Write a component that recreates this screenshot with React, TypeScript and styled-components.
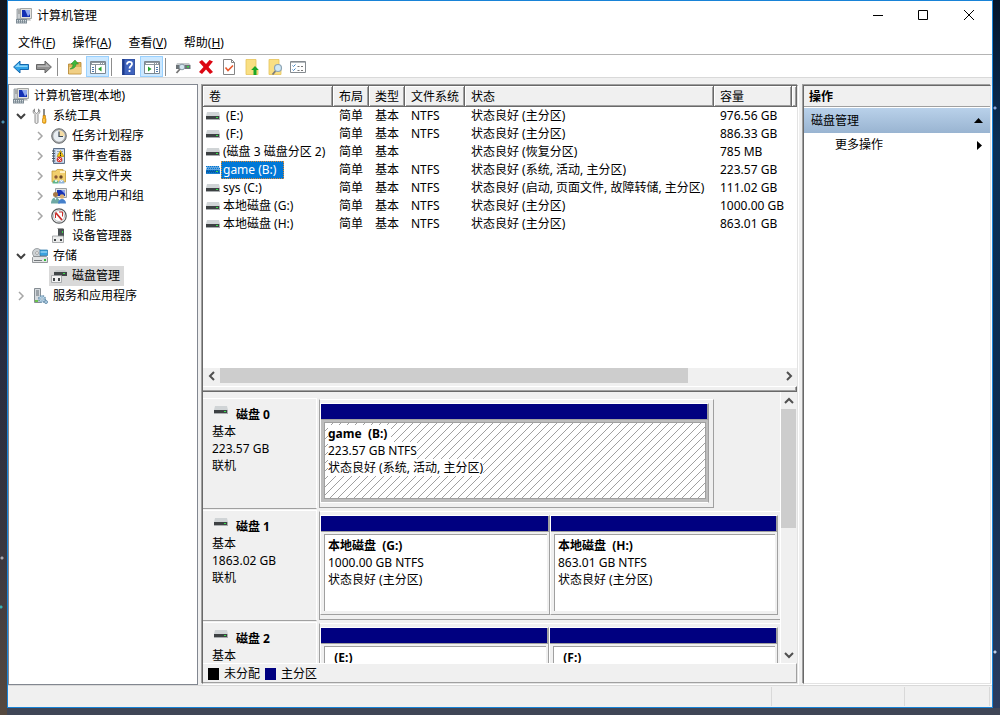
import React from "react";
import styled, { createGlobalStyle, css } from "styled-components";

const Global = createGlobalStyle`
  *, *::before, *::after { box-sizing: border-box; }
  body {
    margin: 0;
    color: #000;
    font: 12px/18px "Noto Sans", "Noto Sans CJK SC", sans-serif;
  }
  button {
    margin: 0;
    padding: 0;
    border: 0;
    background: none;
    color: inherit;
    font: inherit;
    text-align: left;
  }
  ul { margin: 0; padding: 0; list-style: none; }
  svg { display: block; flex: none; }
`;

/* ---------- window frame ---------- */

const Desktop = styled.div`
  display: flex;
  height: 100vh;
  padding: 0 7px 7px;
  background:
    radial-gradient(circle at 1px 607px, #35b0b0 1px, transparent 2px),
    radial-gradient(circle at 2px 558px, #a9a9b0 1px, transparent 2px),
    radial-gradient(circle at 3px 122px, #4a90b0 1px, transparent 2px),
    radial-gradient(circle at 995px 108px, #8ea8d8 1px, transparent 2px),
    radial-gradient(circle at 995px 652px, #c0d0e8 1px, transparent 2px),
    linear-gradient(#3f4656, #3f4656) 100% 100% / calc(100% - 7px) 7px no-repeat,
    linear-gradient(#04152c, #0b3056 20%, #0c2c50 60%, #2b3d60) 100% 0 / 7px 100% no-repeat,
    linear-gradient(#141720, #1b1f2c 30%, #282c40 50%, #37363f 75%, #56493f);
`;

const Window = styled.main`
  display: flex;
  flex-direction: column;
  flex: 1;
  min-width: 0;
  border: 1px solid #1883d7;
  background: #fff;
`;

const TitleBar = styled.header`
  display: flex;
  align-items: center;
  height: 29px;
  flex: none;
  padding-left: 8px;
`;

const Title = styled.h1`
  flex: 1;
  margin: 0 0 0 5px;
  font-size: 12px;
  font-weight: 400;
`;

const CaptionButton = styled.button`
  display: grid;
  place-items: center;
  width: 46px;
  height: 29px;
`;

const MenuBar = styled.nav`
  display: flex;
  gap: 17px;
  height: 25px;
  flex: none;
  padding: 2px 10px 0;
  border-bottom: 1px solid #b4b4b4;
`;

const ToolBar = styled.div`
  display: flex;
  height: 23px;
  flex: none;
  padding: 1px 1px 0;
  border-bottom: 1px solid #d9d9d9;
`;

const ToolButton = styled.button<{ $active?: boolean }>`
  display: grid;
  place-items: center;
  width: 23px;
  height: 21px;
  ${(p) =>
    p.$active &&
    css`
      border: 1px solid #99d1ff;
      background: #cce8ff;
    `}
`;

const ToolDivider = styled.span`
  width: 1px;
  height: 18px;
  margin: 2px 5px 0 2px;
  background: #8d8d8d;
`;

const Workspace = styled.div`
  display: grid;
  grid-template-columns: 190px minmax(0, 1fr) 189px;
  grid-template-rows: minmax(0, 1fr);
  gap: 3px;
  flex: 1;
  min-height: 0;
  padding: 6px 1px 0 0;
  background: #f0f0f0;
`;

const StatusBar = styled.footer`
  display: grid;
  grid-template-columns: 1fr 133px 85px;
  height: 22px;
  flex: none;
  padding: 1px 2px 1px 0;
  border-top: 1px solid #d9d9d9;
  background: #f0f0f0;
`;

const StatusCell = styled.span`
  border-right: 1px solid #d9d9d9;
`;

/* ---------- navigation tree ---------- */

const TreePane = styled.nav`
  overflow: hidden;
  padding: 1px 0 0 2px;
  border: 1px solid #828790;
  background: #fff;
`;

const TreeRow = styled.li<{ $depth: number }>`
  display: flex;
  align-items: center;
  height: 20px;
  padding-left: ${(p) => (p.$depth ? 2 + (p.$depth - 1) * 19 : 0)}px;
`;

const Twisty = styled.button`
  display: grid;
  place-items: center;
  width: 16px;
  height: 16px;
  margin-right: 1px;
`;

const TreeLabel = styled.button<{ $selected?: boolean }>`
  display: flex;
  align-items: center;
  gap: 5px;
  height: 20px;
  padding: 0 4px 0 2px;
  white-space: nowrap;
  background: ${(p) => (p.$selected ? "#d9d9d9" : "transparent")};
`;

/* ---------- volume list ---------- */

const sunken = css`
  margin: 1px 0 1px 1px;
  border: 1px solid;
  border-color: #696969 #e3e3e3 #e3e3e3 #696969;
  box-shadow: -1px -1px #a0a0a0, 1px 1px #fff;
`;

const CenterPane = styled.section`
  display: flex;
  flex-direction: column;
  min-width: 0;
  ${sunken}
  margin-right: 1px;
`;

const ListView = styled.div`
  flex: 1 1 0;
  min-height: 0;
  overflow: hidden;
  background: #fff;
`;

const VolumeTable = styled.table`
  width: 100%;
  border-collapse: separate;
  border-spacing: 0;
  table-layout: fixed;
`;

const HeadCell = styled.th<{ $width?: number }>`
  width: ${(p) => (p.$width ? `${p.$width}px` : "auto")};
  height: 21px;
  padding: 2px 0 0 6px;
  border: solid;
  border-width: 0 1px 1px 0;
  border-color: #696969;
  background: #f0f0f0;
  box-shadow: inset 1px 1px #fff, inset -1px -1px #a0a0a0;
  font-weight: 400;
  text-align: left;
  white-space: nowrap;
`;

const Cell = styled.td`
  height: 18px;
  padding: 0 0 0 6px;
  overflow: hidden;
  white-space: nowrap;
`;

const NameCell = styled(Cell)`
  padding-left: 3px;
`;

const VolumeName = styled.div`
  display: flex;
  align-items: center;
  gap: 1px;
  height: 18px;
`;

const NameText = styled.span<{ $selected?: boolean }>`
  height: 18px;
  padding: 0 2px;
  white-space: pre;
  ${(p) =>
    p.$selected &&
    css`
      padding-right: 8px;
      outline: 1px dotted #e08a30;
      outline-offset: -1px;
      background: #0078d7;
      color: #fff;
    `}
`;

/* ---------- scroll bars and splitter ---------- */

const HorizontalScroll = styled.div`
  display: flex;
  height: 18px;
  flex: none;
  padding-bottom: 3px;
  background: #f0f0f0;
`;

const VerticalScroll = styled.div`
  display: flex;
  flex-direction: column;
  width: 17px;
  flex: none;
  padding-right: 1px;
  border-left: 1px solid #fff;
  background: #f0f0f0;
`;

const ScrollButton = styled.button`
  display: grid;
  place-items: center;
  min-width: 15px;
  flex: 0 0 17px;
`;

const ScrollThumb = styled.span<{ $share: number }>`
  flex: ${(p) => p.$share} 1 0;
  background: #cdcdcd;
`;

const ScrollRest = styled.span<{ $share: number }>`
  flex: ${(p) => p.$share} 1 0;
`;

const Splitter = styled.div`
  height: 6px;
  flex: none;
  border: solid;
  border-width: 1px 1px 1px 0;
  border-color: #fff #696969 #696969 #fff;
  background: #f0f0f0;
  box-shadow: inset -1px -1px #a0a0a0;
`;

/* ---------- disk map ---------- */

const DiskMap = styled.div`
  display: flex;
  flex: 0 0 271px;
  min-height: 0;
  background: #f0f0f0;
`;

const DiskList = styled.div`
  flex: 1;
  min-width: 0;
  padding-top: 6px;
  overflow: hidden;
`;

const DiskRow = styled.div`
  display: flex;
  gap: 2px;
  height: 112px;
`;

const DiskLabel = styled.div`
  width: 114px;
  height: 111px;
  flex: none;
  padding: 7px 0 0 9px;
  border: solid;
  border-width: 1px 1px 1px 0;
  border-color: #fff #fff #a0a0a0;
  line-height: 17px;
`;

const DiskTitle = styled.h2`
  display: flex;
  gap: 8px;
  margin: 0 0 0 2px;
  font-size: 12px;
  line-height: 17px;
`;

const Volumes = styled.div<{ $width?: number }>`
  display: flex;
  flex: ${(p) => (p.$width ? `0 1 ${p.$width}px` : "1 1 0")};
  min-width: 0;
  height: 109px;
  margin-top: 1px;
  padding: 3px ${(p) => (p.$width ? 4 : 2)}px 4px 0;
  border: solid;
  border-width: 1px ${(p) => (p.$width ? 1 : 0)}px 1px 1px;
  border-color: #fff #a0a0a0 #a0a0a0;
`;

const Volume = styled.article<{ $share: number; $selected?: boolean }>`
  display: flex;
  flex-direction: column;
  flex: ${(p) => p.$share} 1 0;
  min-width: 0;
  border: 1px solid;
  border-color: #fff #a0a0a0 ${(p) => (p.$selected ? "#fff" : "#a0a0a0")} #fff;
  background: ${(p) => (p.$selected ? "#bdbdbd" : "#f0f0f0")};
`;

const VolumeCap = styled.div`
  height: 16px;
  flex: none;
  background: #000080;
  box-shadow: inset -1px -1px #a0a0a0;
`;

const VolumeBody = styled.div<{ $selected?: boolean }>`
  position: relative;
  flex: 1;
  margin: 2px 2px 3px 3px;
  padding: 2px 3px;
  overflow: hidden;
  border: solid #a0a0a0;
  border-width: ${(p) => (p.$selected ? "1px" : "1px 0 0 1px")};
  background: #fff;
  line-height: 17px;
`;

const HatchLayer = styled.svg`
  position: absolute;
  inset: 0;
`;

const VolumeLine = styled.div`
  position: relative;
  width: max-content;
  background: #fff;
  white-space: pre;
`;

const VolumeTitle = styled(VolumeLine).attrs({ as: "h3" })`
  margin: 0;
  padding-right: 4px;
  font-size: 12px;
`;

const Legend = styled.div`
  display: flex;
  align-items: center;
  gap: 5px;
  height: 20px;
  flex: none;
  padding: 1px 0 0 5px;
  border: solid;
  border-width: 1px 1px 1px 0;
  border-color: #fff #a0a0a0 #a0a0a0;
  background: #f0f0f0;
`;

const LegendItem = styled.span`
  display: flex;
  align-items: center;
  gap: 5px;
`;

const Swatch = styled.i<{ $color: string }>`
  width: 11px;
  height: 12px;
  background: ${(p) => p.$color};
`;

/* ---------- actions pane ---------- */

const ActionsPane = styled.aside`
  min-width: 0;
  background: #fff;
  ${sunken}
`;

const ActionsTitle = styled.h2`
  height: 21px;
  margin: 0;
  padding: 1px 0 0 5px;
  border-bottom: 1px solid #a0a0a0;
  background: #f0f0f0;
  font-size: 12px;
  line-height: 19px;
`;

const ActionGroup = styled.button`
  display: flex;
  align-items: center;
  justify-content: space-between;
  width: 100%;
  height: 25px;
  margin-top: 1px;
  padding: 0 7px;
  background: linear-gradient(#b9d1ea, #99b4d1);
`;

const ActionItem = styled.button`
  display: flex;
  align-items: center;
  justify-content: space-between;
  width: 100%;
  height: 24px;
  padding: 0 8px 0 31px;
`;

/* ---------- icons ---------- */

const Svg = ({ children }: React.PropsWithChildren) => (
  <svg width="16" height="16" viewBox="0 0 16 16" aria-hidden="true">
    {children}
  </svg>
);

const ComputerIcon = () => (
  <Svg>
    <path d="M1 1h5v10H1z" fill="#c9cdd0" stroke="#8c9297" strokeWidth=".8" />
    <path d="M2 3h3M2 5h3" stroke="#777" strokeWidth=".8" />
    <path d="M4.500.5h11v10h-11z" fill="#e3e3df" stroke="#a5a7a5" />
    <path d="M6 2h8v7H6z" fill="#1430b4" />
    <path d="M9 2h5v4l-2 2.500z" fill="#91a9ef" />
    <path d="M10 11h4l1 1.500h-4z" fill="#b5b8b8" />
    <path d="M0 11h11v4.500H0z" fill="#7d8b95" />
    <path d="M1 12.500h9M1 14h9" stroke="#eef2f4" strokeWidth=".8" strokeDasharray="1 1" />
  </Svg>
);

const ToolsIcon = () => (
  <Svg>
    <path d="M2.500 1v3l2 1.500 2-1.500V1C8 2 8.500 4 7 5.500L6 6.500V14c0 2-3 2-3 0V6.500L2 5.500C.5 4 1 2 2.500 1z" fill="#e9e9e9" stroke="#777" strokeWidth=".8" />
    <path d="M12 1v7" stroke="#666" strokeWidth="1.500" />
    <path d="M11 7.500h2.500V10l.5 1v3.500c-.5 1.200-3 1.200-3.500 0V11l.5-1z" fill="#f5ae19" stroke="#b97509" strokeWidth=".6" />
    <path d="M12 11v3" stroke="#ffe08a" />
  </Svg>
);

const ClockIcon = () => (
  <Svg>
    <circle cx="8" cy="8" r="7.300" fill="#a3a6a8" stroke="#6d7072" strokeWidth="1" />
    <circle cx="8" cy="8" r="5.700" fill="#e9eef2" />
    <path d="M8 8V2.300A5.700 5.700 0 0 1 13.700 8z" fill="#f5dda6" />
    <path d="M8 3.500V8.500h4" fill="none" stroke="#3c4a58" strokeWidth="1.200" />
  </Svg>
);

const EventIcon = () => (
  <Svg>
    <path d="M2.500.5h11v15h-11z" fill="#b8cce4" stroke="#5d6f87" />
    <path d="M5 2h8v12H5z" fill="#dfe6f0" />
    <path d="M6 3.500h6M6 6h6M6 8h6M6 13h6" stroke="#8fa2bd" />
    <path d="M1 3h3M1 5.500h3M1 8h3M1 10.500h3M1 13h3" stroke="#4d5866" />
    <path d="M9.500 2.500l3.500 6H6z" fill="#f9c80e" stroke="#b18a00" strokeWidth=".6" />
    <path d="M9.500 4.500v2M9.500 7v1" stroke="#222" />
    <circle cx="8.500" cy="11.500" r="2.800" fill="#d93a35" />
    <path d="M7.300 10.300l2.400 2.400m0-2.400l-2.400 2.400" stroke="#fff" />
  </Svg>
);

const SharedIcon = () => (
  <Svg>
    <path d="M1 3h4l1-1.500h6V3h2.500v11H1z" fill="#f2cf6d" stroke="#c29a35" strokeWidth=".8" />
    <path d="M9 3h5v2H9z" fill="#fff2c4" />
    <circle cx="5" cy="9" r="1.700" fill="#8c5a35" />
    <circle cx="10" cy="9" r="1.700" fill="#6a4528" />
    <path d="M1.500 15.500c0-5 6-5 6 0z" fill="#5fb58c" />
    <path d="M7.500 15.500c0-5 6-5 6 0z" fill="#8fb4d8" />
    <path d="M4 12l1 2 1-2M9.500 12l1 2 1-2" stroke="#fff" fill="none" />
  </Svg>
);

const UsersIcon = () => (
  <Svg>
    <path d="M4.500.5h11v9h-11z" fill="#dfe2e2" stroke="#9ba0a2" />
    <path d="M6 2h8v6H6z" fill="#1733b5" />
    <path d="M10 2h4v4z" fill="#8da4ec" />
    <circle cx="4.500" cy="6.500" r="2.500" fill="#a77845" />
    <circle cx="11" cy="8.500" r="2.300" fill="#d8b073" />
    <path d="M0 15.500c0-8 9-8 9 0z" fill="#6ea9a4" />
    <path d="M7 15.500c0-6 8-6 8 0z" fill="#4580cb" />
    <path d="M3.500 10l1 2 1-2" fill="#fff" />
  </Svg>
);

const GaugeIcon = () => (
  <Svg>
    <circle cx="8" cy="8" r="7.200" fill="#fff" stroke="#56595b" strokeWidth="1.200" />
    <circle cx="8" cy="8" r="5.500" fill="none" stroke="#b8bcbf" />
    <path d="M4.500 4.500l6.500 7.500" fill="none" stroke="#c92a27" strokeWidth="1.800" />
    <path d="M4.500 10V5.500M8 4h3.500v4.500" fill="none" stroke="#c92a27" strokeWidth="1" />
  </Svg>
);

const DeviceIcon = () => (
  <Svg>
    <path d="M7 1h6v8H7z" fill="#4b5154" />
    <path d="M6 1l1-1h5l1 1z" fill="#999" />
    <path d="M11 3h1v2h-1z" fill="#3cd64a" />
    <path d="M1.500 8h11v6.500h-11z" fill="#eceded" stroke="#989b9d" strokeWidth=".8" />
    <path d="M3 11h2v2H3zM9 11h2v2H9z" fill="#414548" />
  </Svg>
);

const StorageIcon = () => (
  <Svg>
    <circle cx="5" cy="5" r="4.500" fill="#cdd2d5" stroke="#8c9194" strokeWidth=".8" />
    <circle cx="5" cy="5" r="1.400" fill="#fff" stroke="#888" strokeWidth=".7" />
    <path d="M8 2h7.500v5.500H8z" fill="#3aa3df" stroke="#2774a8" strokeWidth=".7" />
    <path d="M8.500 4h6.500" stroke="#b9e6ff" />
    <path d="M.5 9.500l1-1h13l1 1v5H.5z" fill="#e2e4e5" stroke="#7c8184" strokeWidth=".8" />
    <path d="M2 12.500h8" stroke="#73787b" />
    <path d="M12 11h2v2h-2z" fill="#2fbd3a" />
  </Svg>
);

const DiskManagementIcon = () => (
  <Svg>
    <path d="M5 2h9l2 2H3z" fill="#c6c9ca" />
    <path d="M3 4h13v4H3z" fill="#414648" />
    <path d="M12 5h2v1h-2z" fill="#3be048" />
    <path d="M.5 7.500h10v7H.5z" fill="#f3f3f3" stroke="#9a9da0" strokeWidth=".8" />
    <path d="M2 10h2v3H2zM7 10h2v3H7z" fill="#414548" />
  </Svg>
);

const ServicesIcon = () => (
  <Svg>
    <path d="M2.500.5h6v14h-6z" fill="#d5dade" stroke="#858d93" />
    <path d="M4 3h3M4 5h3M4 7h3" stroke="#606a72" />
    <path d="M3 12h3v2H3z" fill="#6cc24a" />
    <circle cx="10" cy="11" r="3.300" fill="#b9d6ea" stroke="#6f94ae" strokeWidth="1.600" strokeDasharray="1.600 1" />
    <circle cx="10" cy="11" r="1.200" fill="#fff" stroke="#6f94ae" strokeWidth=".7" />
    <circle cx="14" cy="14" r="1.500" fill="#b9d6ea" stroke="#6f94ae" />
  </Svg>
);

const BackIcon = () => (
  <Svg>
    <path d="M.6 8L7 2v3.500h8.500v5H7V14z" fill="#31a3e8" stroke="#1467ad" />
    <path d="M2 8l4-3.800v2.300h8.500V8z" fill="#8ad4f8" />
  </Svg>
);

const ForwardIcon = () => (
  <Svg>
    <path d="M15.400 8L9 2v3.500H.5v5H9V14z" fill="#919191" stroke="#666" />
    <path d="M14 8l-4-3.800v2.300H1.500V8z" fill="#b5b5b5" />
  </Svg>
);

const OpenFolderIcon = () => (
  <Svg>
    <path d="M1.500 5h5l1-1.500H14v11.500H1.500z" fill="#dfb45c" stroke="#b3832c" strokeWidth=".8" />
    <path d="M2 8h12v6.500H2z" fill="#f0cf85" />
    <path d="M3 10c2.500-1 3-3 3-5H4l4-4 3.500 4H9c0 3-2.500 5-6 5z" fill="#3fb83b" stroke="#23842a" strokeWidth=".5" />
  </Svg>
);

const PaneIcon = ({ flip }: { flip?: boolean }) => (
  <Svg>
    <path d="M.5 2.500h15v12H.5z" fill="#fff" stroke="#7c8791" />
    <path d="M1 3h14v3H1z" fill="#8e979f" />
    <path d="M2 4.500h8M11 4.500h1M13 4.500h1" stroke="#fff" />
    <path d={flip ? "M10.500 6v8" : "M5.500 6v8"} stroke="#7c8791" />
    <path d={flip ? "M12 8.500h2M12 10.500h2M12 12.500h2" : "M2 8.500h2M2 10.500h2M2 12.500h2"} stroke="#4d77ae" />
    <path d={flip ? "M4 7.500v5L7.500 10z" : "M11.500 7.500v5L8 10z"} fill="#27a52e" />
  </Svg>
);

const HelpIcon = () => (
  <Svg>
    <path d="M1.500 0h12v16h-12z" fill="#3f63bd" stroke="#213d8c" strokeWidth=".8" />
    <path d="M1.500 0h2v16h-2z" fill="#1d3a8b" />
    <path d="M6 5.500c0-3.500 5-3.500 5-.5 0 2-2.500 2-2.500 4.500M8.500 11v2" fill="none" stroke="#fff" strokeWidth="1.800" />
  </Svg>
);

const SettingsDriveIcon = () => (
  <Svg>
    <path d="M2 4h12l1.500 2H1z" fill="#c5c9cc" />
    <path d="M1 6h14.500v4H1z" fill="#6b7276" />
    <path d="M12 7h2v1.500h-2z" fill="#35d845" />
    <circle cx="7" cy="8" r="2.800" fill="#d4e6f1" stroke="#8b9ba6" />
    <path d="M5 10l-3.500 4" stroke="#777" strokeWidth="1.800" />
  </Svg>
);

const DeleteIcon = () => (
  <Svg>
    <path d="M1 3l3-2 4 4 3.500-4L15 2.500 10.500 8l4.500 5-3 2-4-4.500L4 15l-3-2 4.500-5z" fill="#dc0712" />
  </Svg>
);

const CheckPageIcon = () => (
  <Svg>
    <path d="M2.500.5h8l3 3v12h-11z" fill="#fff" stroke="#858585" />
    <path d="M10.500.5v3h3" fill="none" stroke="#858585" />
    <path d="M4.500 8.500l2.500 3 5-5" fill="none" stroke="#e8582c" strokeWidth="1.600" />
  </Svg>
);

const FolderUpIcon = () => (
  <Svg>
    <path d="M2 .5h10V9l2 2v4.500H2z" fill="#f9df83" stroke="#e6c35a" strokeWidth=".8" />
    <path d="M11 7l3.800 4h-2.300v5h-3v-5H7.200z" fill="#1ba727" />
  </Svg>
);

const FolderSearchIcon = () => (
  <Svg>
    <path d="M2 .5h10V9l2 2v4.500H2z" fill="#f9df83" stroke="#e6c35a" strokeWidth=".8" />
    <path d="M8.500 12L5.500 15.500" stroke="#7c7c7c" strokeWidth="1.800" />
    <circle cx="11" cy="9" r="3.500" fill="#cfe8f7" stroke="#8ea5b4" strokeWidth="1.200" />
  </Svg>
);

const CheckListIcon = () => (
  <Svg>
    <path d="M.5 2.500h15v11H.5z" fill="#fff" stroke="#858b90" />
    <path d="M1 3.500h14" stroke="#b5babe" />
    <path d="M2.500 6.500l1 1 2-2M2.500 10.500l1 1 2-2" fill="none" stroke="#3f83c3" />
    <path d="M7.500 7.500h2M11 7.500h2M7.500 11.500h2M11 11.500h2" stroke="#777" />
  </Svg>
);

const DriveIcon = ({ selected }: { selected?: boolean }) => (
  <svg width="14" height="8" viewBox="0 0 14 8" aria-hidden="true">
    <path d="M1 0h12l1 4H0z" fill={selected ? "#5fa3dc" : "#d0d4d6"} />
    <path d="M0 4h14v4H0z" fill={selected ? "#1f7fcc" : "#a9adaf"} />
    <path d="M0 4h13v3H0z" fill={selected ? "#075ba3" : "#3d4143"} />
    <path d="M10 5h2v1h-2z" fill="#35e24a" />
    {selected && (
      <path
        d="M0 .5h14M1 2.500h13M0 4.500h14M1 6.500h13"
        stroke="#0078d7"
        strokeDasharray="1 1"
      />
    )}
  </svg>
);

const rotations = { right: 0, down: 90, left: 180, up: 270 };

const Chevron = ({
  dir,
  color = "#505050",
  width = 2,
}: {
  dir: keyof typeof rotations;
  color?: string;
  width?: number;
}) => (
  <svg width="10" height="10" viewBox="0 0 10 10" aria-hidden="true">
    <path
      d="M3 1l4 4-4 4"
      fill="none"
      stroke={color}
      strokeWidth={width}
      transform={`rotate(${rotations[dir]} 5 5)`}
    />
  </svg>
);

const Hatch = () => (
  <HatchLayer width="100%" height="100%" aria-hidden="true">
    <defs>
      <pattern id="hatch" width="8" height="8" patternUnits="userSpaceOnUse">
        {[0, 1, 2, 3, 4, 5, 6, 7].map((i) => (
          <rect key={i} x={i} y={7 - i} width="1" height="1" fill="#a0a0a0" />
        ))}
      </pattern>
    </defs>
    <rect width="100%" height="100%" fill="url(#hatch)" />
  </HatchLayer>
);

/* ---------- data ---------- */

const menus = [
  ["文件", "F"],
  ["操作", "A"],
  ["查看", "V"],
  ["帮助", "H"],
];

type Tool = { label: string; icon: React.ReactNode; active?: boolean };

const toolGroups: Tool[][] = [
  [
    { label: "后退", icon: <BackIcon /> },
    { label: "前进", icon: <ForwardIcon /> },
  ],
  [
    { label: "打开", icon: <OpenFolderIcon /> },
    { label: "显示控制台树", icon: <PaneIcon />, active: true },
  ],
  [
    { label: "帮助", icon: <HelpIcon /> },
    { label: "显示操作窗格", icon: <PaneIcon flip />, active: true },
  ],
  [
    { label: "设置", icon: <SettingsDriveIcon /> },
    { label: "删除", icon: <DeleteIcon /> },
    { label: "属性", icon: <CheckPageIcon /> },
    { label: "向上", icon: <FolderUpIcon /> },
    { label: "搜索", icon: <FolderSearchIcon /> },
    { label: "列表", icon: <CheckListIcon /> },
  ],
];

type Node = {
  depth: number;
  label: string;
  icon: React.ReactNode;
  state?: "open" | "closed";
  selected?: boolean;
};

const nodes: Node[] = [
  { depth: 0, label: "计算机管理(本地)", icon: <ComputerIcon /> },
  { depth: 1, label: "系统工具", icon: <ToolsIcon />, state: "open" },
  { depth: 2, label: "任务计划程序", icon: <ClockIcon />, state: "closed" },
  { depth: 2, label: "事件查看器", icon: <EventIcon />, state: "closed" },
  { depth: 2, label: "共享文件夹", icon: <SharedIcon />, state: "closed" },
  { depth: 2, label: "本地用户和组", icon: <UsersIcon />, state: "closed" },
  { depth: 2, label: "性能", icon: <GaugeIcon />, state: "closed" },
  { depth: 2, label: "设备管理器", icon: <DeviceIcon /> },
  { depth: 1, label: "存储", icon: <StorageIcon />, state: "open" },
  { depth: 2, label: "磁盘管理", icon: <DiskManagementIcon />, selected: true },
  { depth: 1, label: "服务和应用程序", icon: <ServicesIcon />, state: "closed" },
];

const columns: [string, number?][] = [
  ["卷", 130],
  ["布局", 36],
  ["类型", 36],
  ["文件系统", 60],
  ["状态", 249],
  ["容量", 78],
  [""],
];

const volumes = [
  [" (E:)", "NTFS", "状态良好 (主分区)", "976.56 GB"],
  [" (F:)", "NTFS", "状态良好 (主分区)", "886.33 GB"],
  ["(磁盘 3 磁盘分区 2)", "", "状态良好 (恢复分区)", "785 MB"],
  ["game (B:)", "NTFS", "状态良好 (系统, 活动, 主分区)", "223.57 GB"],
  ["sys (C:)", "NTFS", "状态良好 (启动, 页面文件, 故障转储, 主分区)", "111.02 GB"],
  ["本地磁盘 (G:)", "NTFS", "状态良好 (主分区)", "1000.00 GB"],
  ["本地磁盘 (H:)", "NTFS", "状态良好 (主分区)", "863.01 GB"],
];

const selectedVolume = "game (B:)";

type Part = { title: string; details?: string[]; share: number; selected?: boolean };
type Disk = { name: string; details: string[]; width?: number; parts: Part[] };

const disks: Disk[] = [
  {
    name: "磁盘 0",
    details: ["基本", "223.57 GB", "联机"],
    width: 395,
    parts: [
      {
        title: "game  (B:)",
        details: ["223.57 GB NTFS", "状态良好 (系统, 活动, 主分区)"],
        share: 1,
        selected: true,
      },
    ],
  },
  {
    name: "磁盘 1",
    details: ["基本", "1863.02 GB", "联机"],
    parts: [
      { title: "本地磁盘  (G:)", details: ["1000.00 GB NTFS", "状态良好 (主分区)"], share: 230 },
      { title: "本地磁盘  (H:)", details: ["863.01 GB NTFS", "状态良好 (主分区)"], share: 228 },
    ],
  },
  {
    name: "磁盘 2",
    details: ["基本"],
    parts: [
      { title: "  (E:)", share: 229 },
      { title: "  (F:)", share: 229 },
    ],
  },
];

/* ---------- page ---------- */

export default function App() {
  return (
    <>
      <Global />
      <Desktop>
        <Window>
          <TitleBar>
            <ComputerIcon />
            <Title>计算机管理</Title>
            <CaptionButton aria-label="最小化">
              <Svg>
                <path d="M4 7.500h10" stroke="#000" />
              </Svg>
            </CaptionButton>
            <CaptionButton aria-label="最大化">
              <Svg>
                <path d="M3.500 2.500h9v9h-9z" fill="none" stroke="#000" />
              </Svg>
            </CaptionButton>
            <CaptionButton aria-label="关闭">
              <Svg>
                <path d="M3 2l10 10M13 2L3 12" stroke="#000" />
              </Svg>
            </CaptionButton>
          </TitleBar>

          <MenuBar>
            {menus.map(([label, key]) => (
              <button key={key}>
                {label}(<u>{key}</u>)
              </button>
            ))}
          </MenuBar>

          <ToolBar role="toolbar">
            {toolGroups.map((group, i) => (
              <React.Fragment key={i}>
                {i > 0 && <ToolDivider />}
                {group.map((tool) => (
                  <ToolButton key={tool.label} aria-label={tool.label} $active={tool.active}>
                    {tool.icon}
                  </ToolButton>
                ))}
              </React.Fragment>
            ))}
          </ToolBar>

          <Workspace>
            <TreePane>
              <ul>
                {nodes.map((node) => (
                  <TreeRow key={node.label} $depth={node.depth}>
                    {node.depth > 0 &&
                      (node.state ? (
                        <Twisty aria-label={node.label} aria-expanded={node.state === "open"}>
                          <Chevron
                            dir={node.state === "open" ? "down" : "right"}
                            color={node.state === "open" ? "#404040" : "#a6a6a6"}
                            width={node.state === "open" ? 2 : 1.5}
                          />
                        </Twisty>
                      ) : (
                        <Twisty as="span" />
                      ))}
                    <TreeLabel $selected={node.selected}>
                      {node.icon}
                      {node.label}
                    </TreeLabel>
                  </TreeRow>
                ))}
              </ul>
            </TreePane>

            <CenterPane>
              <ListView>
                <VolumeTable>
                  <thead>
                    <tr>
                      {columns.map(([label, width]) => (
                        <HeadCell key={label} $width={width}>
                          {label}
                        </HeadCell>
                      ))}
                    </tr>
                  </thead>
                  <tbody>
                    {volumes.map(([name, fs, status, size]) => (
                      <tr key={name}>
                        <NameCell>
                          <VolumeName>
                            <DriveIcon selected={name === selectedVolume} />
                            <NameText $selected={name === selectedVolume}>{name}</NameText>
                          </VolumeName>
                        </NameCell>
                        <Cell>简单</Cell>
                        <Cell>基本</Cell>
                        <Cell>{fs}</Cell>
                        <Cell>{status}</Cell>
                        <Cell>{size}</Cell>
                        <Cell />
                      </tr>
                    ))}
                  </tbody>
                </VolumeTable>
              </ListView>
              <HorizontalScroll>
                <ScrollButton aria-label="向左滚动">
                  <Chevron dir="left" />
                </ScrollButton>
                <ScrollThumb $share={468} />
                <ScrollRest $share={92} />
                <ScrollButton aria-label="向右滚动">
                  <Chevron dir="right" />
                </ScrollButton>
              </HorizontalScroll>
              <Splitter />

              <DiskMap>
                <DiskList>
                  {disks.map((disk) => (
                    <DiskRow key={disk.name}>
                      <DiskLabel>
                        <DiskTitle>
                          <DriveIcon />
                          {disk.name}
                        </DiskTitle>
                        {disk.details.map((line) => (
                          <div key={line}>{line}</div>
                        ))}
                      </DiskLabel>
                      <Volumes $width={disk.width}>
                        {disk.parts.map((part) => (
                          <Volume key={part.title} $share={part.share} $selected={part.selected}>
                            <VolumeCap />
                            <VolumeBody $selected={part.selected}>
                              {part.selected && <Hatch />}
                              <VolumeTitle>{part.title}</VolumeTitle>
                              {part.details?.map((line) => (
                                <VolumeLine key={line}>{line}</VolumeLine>
                              ))}
                            </VolumeBody>
                          </Volume>
                        ))}
                      </Volumes>
                    </DiskRow>
                  ))}
                </DiskList>
                <VerticalScroll>
                  <ScrollButton aria-label="向上滚动">
                    <Chevron dir="up" />
                  </ScrollButton>
                  <ScrollThumb $share={119} />
                  <ScrollRest $share={118} />
                  <ScrollButton aria-label="向下滚动">
                    <Chevron dir="down" />
                  </ScrollButton>
                </VerticalScroll>
              </DiskMap>
              <Legend>
                <LegendItem>
                  <Swatch $color="#000" />
                  未分配
                </LegendItem>
                <LegendItem>
                  <Swatch $color="#000080" />
                  主分区
                </LegendItem>
              </Legend>
            </CenterPane>

            <ActionsPane>
              <ActionsTitle>操作</ActionsTitle>
              <ActionGroup>
                磁盘管理
                <svg width="9" height="5" viewBox="0 0 9 5" aria-hidden="true">
                  <path d="M0 5l4.500-5L9 5z" />
                </svg>
              </ActionGroup>
              <ActionItem>
                更多操作
                <svg width="5" height="9" viewBox="0 0 5 9" aria-hidden="true">
                  <path d="M0 0l5 4.500L0 9z" />
                </svg>
              </ActionItem>
            </ActionsPane>
          </Workspace>

          <StatusBar>
            <StatusCell />
            <StatusCell />
            <StatusCell />
          </StatusBar>
        </Window>
      </Desktop>
    </>
  );
}
